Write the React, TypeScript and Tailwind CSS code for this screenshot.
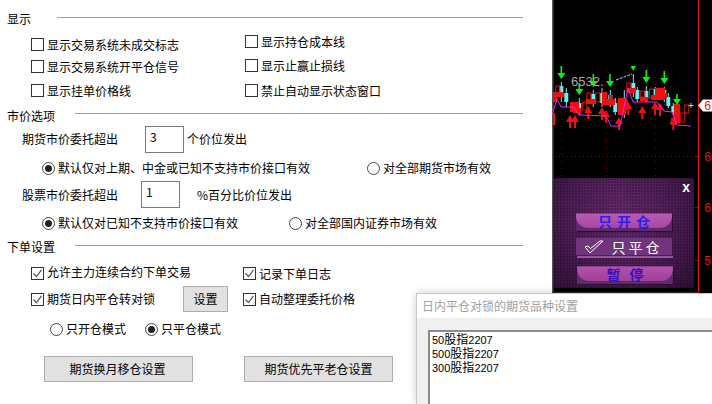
import React from "react";

const cjk = "font-['Noto_Sans_CJK_SC','Noto_Sans',sans-serif]";

const Check = () => (
    <svg width="11" height="11" viewBox="0 0 11 11" className="block">
        <path d="M1.5 5.5 L4.5 8.5 L9.5 1.8" fill="none" stroke="#555" strokeWidth="1.2" />
    </svg>
);

const CheckBox = ({ label, checked, textClass = "" }: { label: string; checked?: boolean; textClass?: string }) => (
    <div className="flex h-[13px] items-center gap-[3px]">
        <span className="flex h-[13px] w-[13px] shrink-0 items-center justify-center border border-[#333] bg-white">
            {checked && <Check />}
        </span>
        <span className={`whitespace-nowrap text-[12px] leading-[16px] text-black ${textClass}`}>{label}</span>
    </div>
);

const Radio = ({ label, checked }: { label: string; checked?: boolean }) => (
    <div className="flex h-[14px] items-center gap-[3px]">
        <span className="flex h-[13px] w-[13px] shrink-0 items-center justify-center rounded-full border border-[#444] bg-white">
            {checked && <span className="h-[7px] w-[7px] rounded-full bg-[#222]" />}
        </span>
        <span className="whitespace-nowrap text-[12px] leading-[16px] text-black">{label}</span>
    </div>
);

const Heading = ({ title, lineTop, lineLeft }: { title: string; lineTop: string; lineLeft: string }) => (
    <div className="flex h-[16px] pl-[7px] pr-[29px]">
        <span className={`whitespace-nowrap text-[12px] leading-[16px] text-black ${lineLeft}`}>{title}</span>
        <div className={`h-px flex-1 bg-[#a0a0a0] ${lineTop}`} />
    </div>
);

const Field = ({ value, className }: { value: string; className: string }) => (
    <div className={`h-[27px] w-[39px] border border-[#7a7a7a] pl-[4px] pt-[2px] text-[12px] leading-[16px] text-black ${className}`}>
        {value}
    </div>
);

const FlatButton = ({ label, className }: { label: string; className: string }) => (
    <div className={`flex h-[26px] items-center justify-center border border-[#adadad] bg-[#e1e1e1] text-[12px] text-black ${className}`}>
        {label}
    </div>
);

// x, wick top, body top, body bottom, wick bottom
const cyanCandles = [
    [561.3, 82, 86, 95, 102], [566.3, 88, 93, 102, 107], [579.3, 98, 103, 110, 115], [593.3, 90, 94, 102, 107],
    [602, 88, 93, 103, 107], [610.3, 90, 95, 102, 107], [615.3, 98, 103, 112, 115], [624.3, 90, 98, 113, 118],
    [633.3, 74, 83, 90, 97], [637.3, 87, 90, 99, 102], [646.3, 86, 91, 99, 102], [655.3, 87, 89, 98, 100],
    [664.3, 87, 90, 98, 102], [668.3, 93, 97, 106, 108], [673.3, 103, 106, 112, 115], [677.3, 113, 118, 122, 123],
];
const redHollow = [
    [557.3, 86, 93], [588.3, 93, 100], [597.3, 93, 102], [628.3, 83, 92], [584.3, 102, 110],
    [651, 89, 98], [682.3, 113, 122], [686.3, 105, 113], [642.3, 91, 97],
];
const redBlocks = [
    [553, 92, 11, 5], [553, 97, 4, 5], [570, 102, 9, 10], [573, 108, 8, 5], [586, 99, 10, 5],
    [602, 92, 5, 13], [605, 99, 10, 6], [609, 95, 3, 8], [618, 98, 8, 17], [622, 100, 6, 8],
    [628, 88, 8, 5], [640, 97, 8, 4], [655, 88, 10, 12], [651, 95, 7, 5], [659, 93, 8, 5],
    [674, 104, 6, 19], [671, 118, 5, 7], [553, 113, 2, 12],
];
const greenArrows = [
    [561.3, 66, 79], [579.3, 83, 95], [593.3, 74, 87], [610, 74, 87], [646.3, 70, 83], [664.3, 71, 84], [677, 94, 105],
];
const redArrows = [
    [570, 115], [575, 115], [588.3, 106], [602, 107], [606, 110], [619, 117], [628.3, 102], [642.3, 106], [655, 102], [660, 103], [673.3, 117],
];

const Chart = () => (
    <svg viewBox="552 0 160 293" width="160" height="293" className="absolute inset-0 block">
        <rect x="552" y="0" width="160" height="293" fill="#000" />
        <rect x="552" y="0" width="1.5" height="293" fill="#555" />
        <rect x="552" y="292" width="146" height="1" fill="#333" />
        {[561.5, 606.5, 655.5].map((x) => (
            <line key={x} x1={x} y1="70" x2={x} y2="293" stroke="#8a0000" strokeDasharray="1 6" />
        ))}
        <line x1="555" y1="156.5" x2="698" y2="156.5" stroke="#a00000" strokeDasharray="1 3" />
        {cyanCandles.map(([x, a, b, c, d]) => (
            <g key={x}>
                <line x1={x} y1={a} x2={x} y2={d} stroke="#66f0f0" />
                <rect x={x - 2} y={b} width="4" height={c - b} fill="#66f0f0" />
            </g>
        ))}
        {redBlocks.map(([x, y, w, h]) => (
            <rect key={`${x}-${y}`} x={x} y={y} width={w} height={h} fill="#f01010" />
        ))}
        {redHollow.map(([x, a, b]) => (
            <rect key={x} x={x - 1.5} y={a} width="4" height={b - a} fill="none" stroke="#f01010" />
        ))}
        {greenArrows.map(([x, a, b]) => (
            <path key={x} d={`M${x - 0.8} ${a} H${x + 0.8} V${b - 6} H${x + 4} L${x} ${b} L${x - 4} ${b - 6} H${x - 0.8} Z`} fill="#10f010" />
        ))}
        <path d="M630.5 66 H636 L633.3 71 Z" fill="#10f010" />
        {redArrows.map(([x, y]) => (
            <path key={x} d={`M${x} ${y} L${x + 4} ${y + 7} H${x + 1} V${y + 13} H${x - 1} V${y + 7} H${x - 4} Z`} fill="#f01010" />
        ))}
        <polyline
            points="552,115 557,99 561,107 573,107 579,115 606,116 611,126 620,126 628,88 633,102 657,102 664,111 672,112 677,125 691,126"
            fill="none"
            stroke="#f020f0"
            strokeWidth="1"
        />
        <text x="571" y="86" fontFamily="Liberation Sans, sans-serif" fontSize="13" fill="#a8a8a8">6532.</text>
        <polyline points="616,80 624,77 632,74" fill="none" stroke="#c8c8c8" strokeDasharray="3 1" />
        <path d="M691 103 V108 M688.5 105.5 H693.5" stroke="#70f0f0" />
        <rect x="698" y="0" width="1" height="293" fill="#f01010" />
        {[156, 207, 260].map((y) => (
            <rect key={y} x="695" y={y} width="3" height="1" fill="#b00000" />
        ))}
        <path d="M698 105.5 L703 99.5 H712 V111.5 H703 Z" fill="#fff" />
        <text x="704" y="110" fontFamily="Liberation Mono, monospace" fontSize="12" fill="#e01010">6</text>
        <text x="704" y="161" fontFamily="Liberation Mono, monospace" fontSize="12" fill="#f01010">6</text>
        <text x="704" y="212" fontFamily="Liberation Mono, monospace" fontSize="12" fill="#f01010">6</text>
        <text x="704" y="265" fontFamily="Liberation Mono, monospace" fontSize="12" fill="#f01010">5</text>
    </svg>
);

const Panel = () => (
    <div className="absolute left-[2px] top-[178px] flex h-[110px] w-[140px] flex-col bg-[radial-gradient(circle_at_1px_1px,rgba(0,0,0,0.22)_1px,transparent_1px),radial-gradient(ellipse_at_48%_35%,#682a6e,#4c1c55_55%,#2e1036)] bg-[length:3px_3px,100%_100%] pl-[22px]">
        <span className="self-end pr-[4px] font-['Liberation_Sans',sans-serif] text-[14px] font-bold leading-[18px] text-white">x</span>
        <div className="relative mt-[17px] h-[18px] w-[96px] bg-[#5f2a68] shadow-[1px_1px_0_#2a0e30]">
            <div className="flex h-[15px] items-center justify-center rounded-b-[12px] border-t border-[#8a3f8a] bg-gradient-to-b from-[#ba5ab2] to-[#a8469f] pl-[5px] text-[14px] font-bold leading-[14px] tracking-[5px] text-[#2a20f0]">只开仓</div>
        </div>
        <div className="relative mt-[7px] flex h-[17px] w-[96px] items-center justify-center bg-[#70357a] pl-[26px] text-[14px] leading-[14px] tracking-[3px] text-white">
            <svg width="20" height="14" viewBox="0 0 20 14" className="absolute left-[8px] top-[2px]">
                <path d="M1 7 L6 13 L19 1 L16 1 L6.5 8.5 L4 6 Z" fill="#7a3f80" stroke="#fff" strokeWidth="1" />
            </svg>
            只平仓
        </div>
        <div className="ml-px mt-px h-[2px] w-[96px] bg-[#8d5a92]" />
        <div className="relative ml-px mt-[8px] h-[18px] w-[96px] bg-[#5f2a68] shadow-[1px_1px_0_#2a0e30]">
            <div className="flex h-[15px] items-center justify-center rounded-b-[12px] border-t border-[#8a3f8a] bg-gradient-to-b from-[#b252aa] to-[#a0409a] pl-[9px] text-[14px] font-bold leading-[14px] tracking-[9px] text-[#3a10c0]">暂停</div>
        </div>
    </div>
);

const Quote = ({ num, tail }: { num: string; tail: string }) => (
    <div className="h-[14px]">
        <span className="font-['Liberation_Sans',sans-serif] text-[11px]">{num}</span>
        股指
        <span className="font-['Liberation_Sans',sans-serif] text-[11px]">{tail}</span>
    </div>
);

const Dialog = () => (
    <div className="absolute left-[416px] top-[293px] flex h-[111px] w-[296px] flex-col border-l border-t border-[#c8c8c8] bg-[#f0f0f0] shadow-[0_0_8px_rgba(0,0,0,0.2)]">
        <div className="h-[24px] bg-white pl-[5px] text-[12px] leading-[23px] text-[#a0a0a0]">日内平仓对锁的期货品种设置</div>
        <div className="ml-[11px] mt-[12px] flex-1 border-2 border-b-0 border-r-0 border-[#8a8a92] bg-white pl-[2px] text-[12px] leading-[14px] text-black">
            <Quote num="50" tail="2207" />
            <Quote num="500" tail="2207" />
            <Quote num="300" tail="2207" />
        </div>
    </div>
);

export default function App() {
    return (
        <div className={`relative flex h-[404px] w-[712px] overflow-hidden bg-white ${cjk}`}>
            <div className="w-[552px] shrink-0">
                {/* 显示 */}
                <section className="h-[108px] pt-[11px]">
                    <Heading title="显示" lineTop="mt-[6px]" lineLeft="mr-[26px]" />
                    <div className="flex pl-[31px]">
                        <div className="mt-[11px] w-[214px]">
                            <CheckBox label="显示交易系统未成交标志" />
                            <div className="mt-[9px]"><CheckBox label="显示交易系统开平仓信号" /></div>
                            <div className="mt-[11px]"><CheckBox label="显示挂单价格线" /></div>
                        </div>
                        <div className="mt-[8px]">
                            <CheckBox label="显示持仓成本线" />
                            <div className="mt-[11px]"><CheckBox label="显示止赢止损线" /></div>
                            <div className="mt-[12px]"><CheckBox label="禁止自动显示状态窗口" /></div>
                        </div>
                    </div>
                </section>

                {/* 市价选项 */}
                <section className="h-[131px]">
                    <Heading title="市价选项" lineTop="mt-[5px]" lineLeft="mr-[20px]" />
                    <div className="mt-[2px] flex h-[27px] items-center pl-[22px] text-[12px] text-black">
                        <span className="-mt-[2px] w-[123px]">期货市价委托超出</span>
                        <Field value="3" className="mr-[3px]" />
                        <span className="-mt-[2px]">个价位发出</span>
                    </div>
                    <div className="mt-[8px] flex pl-[42px]">
                        <div className="w-[325px]"><Radio label="默认仅对上期、中金或已知不支持市价接口有效" checked /></div>
                        <Radio label="对全部期货市场有效" />
                    </div>
                    <div className="mt-[6px] flex h-[27px] items-center pl-[22px] text-[12px] text-black">
                        <span className="w-[119px]">股票市价委托超出</span>
                        <Field value="1" className="mr-[17px]" />
                        <span>%百分比价位发出</span>
                    </div>
                    <div className="mt-[8px] flex pl-[42px]">
                        <div className="w-[247px]"><Radio label="默认仅对已知不支持市价接口有效" checked /></div>
                        <Radio label="对全部国内证券市场有效" />
                    </div>
                </section>

                {/* 下单设置 */}
                <section>
                    <Heading title="下单设置" lineTop="mt-[6px]" lineLeft="mr-[20px]" />
                    <div className="mt-[12px] flex pl-[31px]">
                        <div className="w-[212px]"><CheckBox label="允许主力连续合约下单交易" checked textClass="-mt-[4px]" /></div>
                        <CheckBox label="记录下单日志" checked />
                    </div>
                    <div className="mt-[6px] flex h-[26px] items-center pl-[31px]">
                        <div className="w-[152px]"><CheckBox label="期货日内平仓转对锁" checked /></div>
                        <FlatButton label="设置" className="w-[45px]" />
                        <div className="ml-[15px]"><CheckBox label="自动整理委托价格" checked /></div>
                    </div>
                    <div className="mt-[10px] flex pl-[50px]">
                        <div className="w-[95px]"><Radio label="只开仓模式" /></div>
                        <Radio label="只平仓模式" checked />
                    </div>
                    <div className="mt-[20px] flex gap-[51px] pl-[44px]">
                        <FlatButton label="期货换月移仓设置" className="w-[149px] pr-[2px]" />
                        <FlatButton label="期货优先平老仓设置" className="w-[149px]" />
                    </div>
                </section>
            </div>

            <div className="relative h-[293px] w-[160px] shrink-0 overflow-hidden">
                <Chart />
                <Panel />
            </div>

            <Dialog />
        </div>
    );
}
